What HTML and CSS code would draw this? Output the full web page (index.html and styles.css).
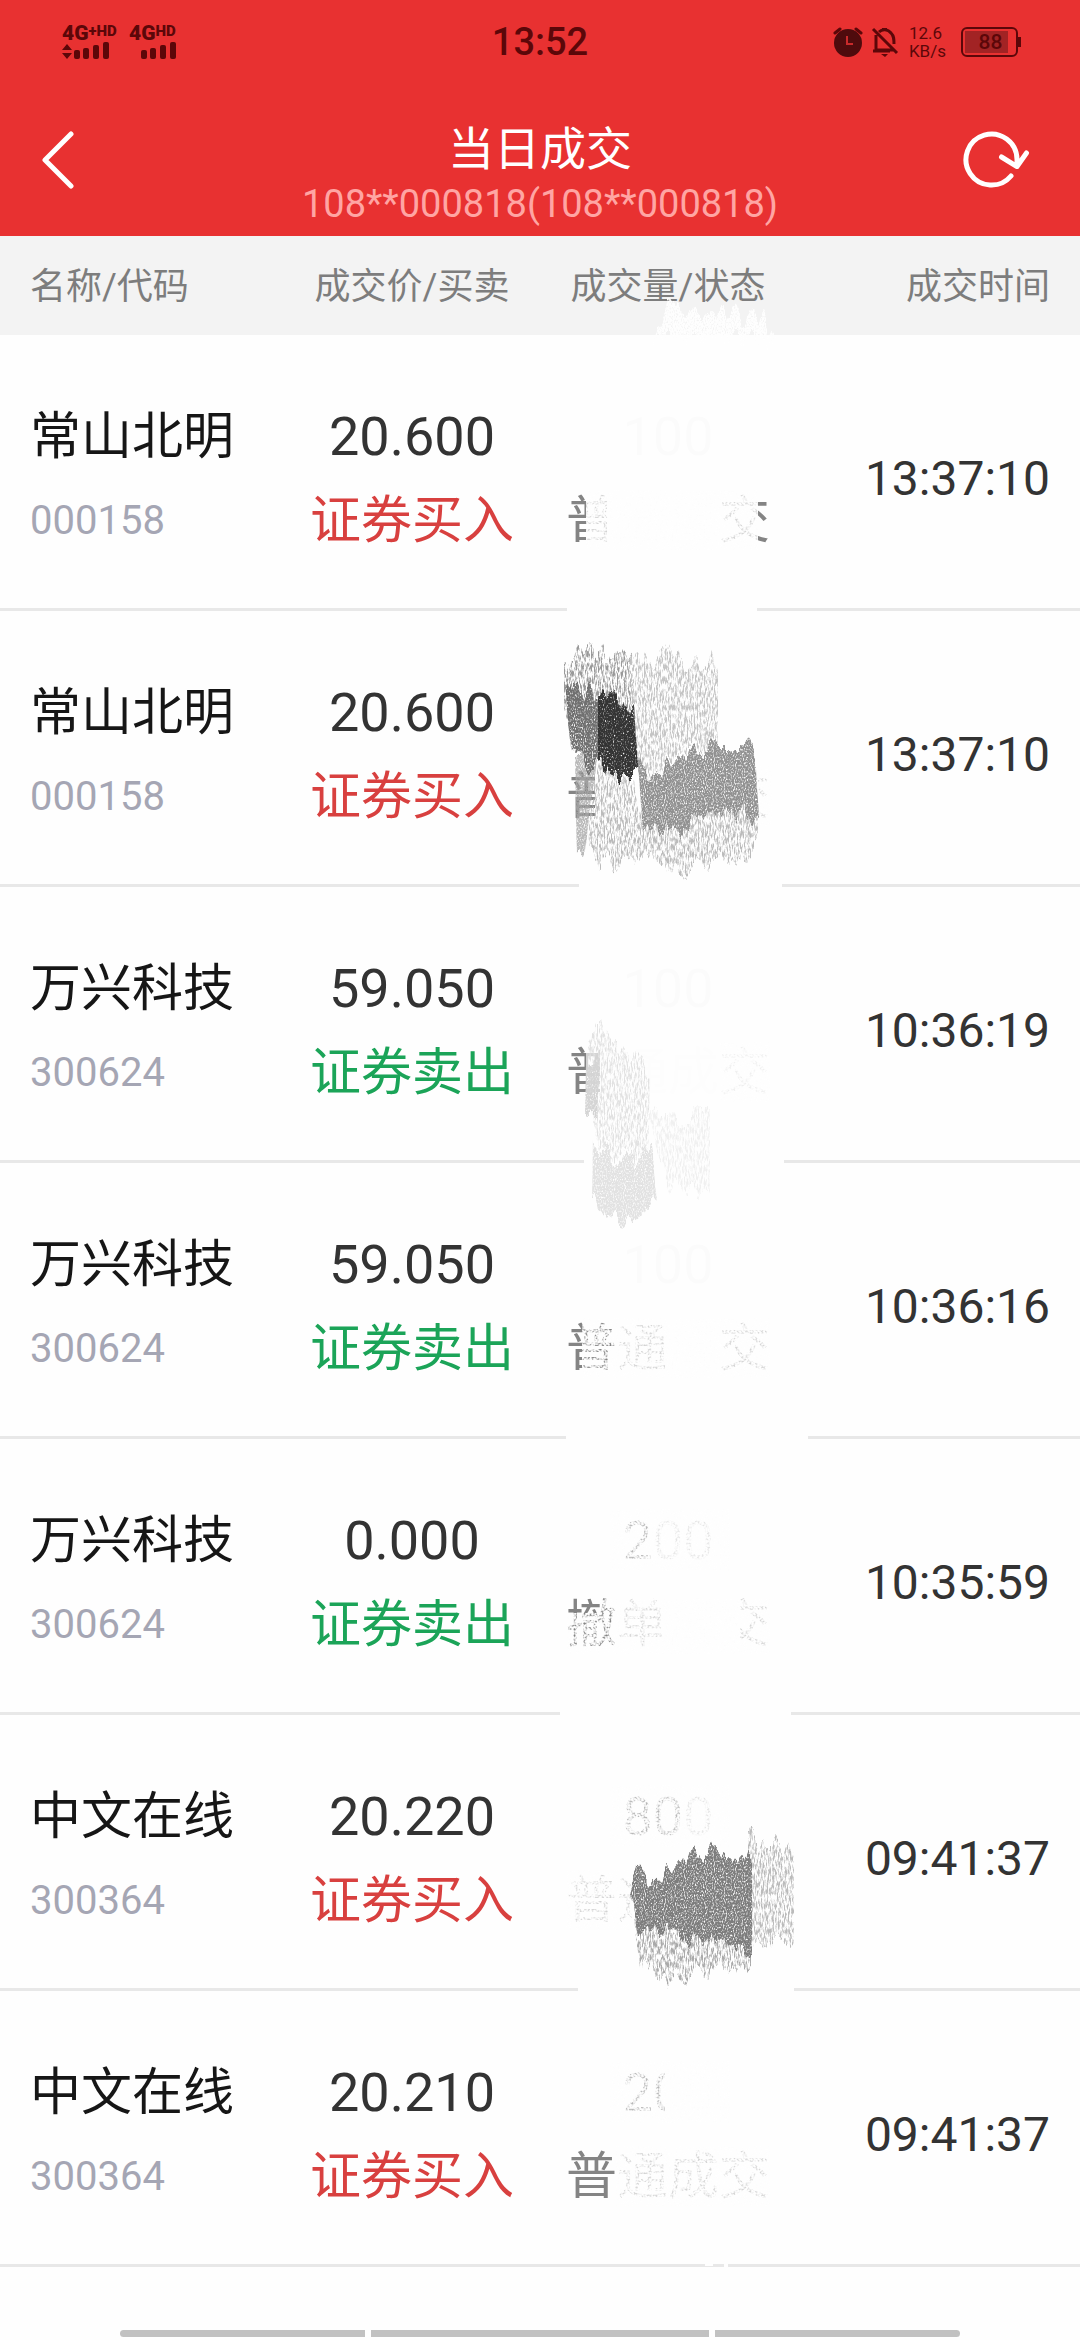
FILE: index.html
```html
<!DOCTYPE html>
<html lang="zh-CN">

<head>
  <meta charset="UTF-8">
  <meta name="viewport" content="width=device-width, initial-scale=1.0">
  <title>当日成交</title>
  <link rel="stylesheet" href="styles.css">
</head>

<body>
  <!-- 涂抹笔刷滤镜 -->
  <svg class="defs" aria-hidden="true">
    <defs>
      <filter id="dense" x="-20%" y="-30%" width="140%" height="160%" color-interpolation-filters="sRGB">
        <feTurbulence type="fractalNoise" baseFrequency=".12 .01" numOctaves="3" seed="4" result="n" />
        <feColorMatrix in="n" values="0 0 0 0 .5  0 1 0 0 0  0 0 1 0 0  0 0 0 0 1" result="m" />
        <feDisplacementMap in="SourceGraphic" in2="m" scale="46" xChannelSelector="R" yChannelSelector="G" result="s" />
        <feTurbulence type="fractalNoise" baseFrequency=".9 .5" numOctaves="2" seed="9" />
        <feColorMatrix values="0 0 0 0 0  0 0 0 0 0  0 0 0 0 0  3 0 0 0 -.6" result="g" />
        <feComposite in="s" in2="g" operator="in" />
      </filter>
      <filter id="sparse" x="-20%" y="-30%" width="140%" height="160%" color-interpolation-filters="sRGB">
        <feTurbulence type="fractalNoise" baseFrequency=".12 .01" numOctaves="3" seed="4" result="n" />
        <feColorMatrix in="n" values="0 0 0 0 .5  0 1 0 0 0  0 0 1 0 0  0 0 0 0 1" result="m" />
        <feDisplacementMap in="SourceGraphic" in2="m" scale="46" xChannelSelector="R" yChannelSelector="G" result="s" />
        <feTurbulence type="fractalNoise" baseFrequency=".7 .15" numOctaves="3" seed="2" />
        <feColorMatrix values="0 0 0 0 0  0 0 0 0 0  0 0 0 0 0  4 0 0 0 -1.65" result="g" />
        <feComposite in="s" in2="g" operator="in" />
      </filter>
      <filter id="speck" x="0" y="0" width="100%" height="100%" color-interpolation-filters="sRGB">
        <feTurbulence type="fractalNoise" baseFrequency=".5" numOctaves="2" seed="6" />
        <feColorMatrix values="0 0 0 0 0  0 0 0 0 0  0 0 0 0 0  3 0 0 0 -.7" result="g" />
        <feComposite in="SourceGraphic" in2="g" operator="in" />
      </filter>
    </defs>
  </svg>

  <div class="page">
    <header class="header">
      <div class="status-bar">
        <div class="signals">
          <div class="signal">
            <div class="net">4G<sup>+HD</sup></div>
            <svg width="48" height="18" viewBox="0 0 48 18">
              <path d="M0 8l5-6 5 6zM0 11h10l-5 6z" />
              <rect x="12" y="8" width="6" height="9" rx="2" />
              <rect x="21" y="6" width="6" height="11" rx="2" />
              <rect x="31" y="3" width="6" height="14" rx="2" />
              <rect x="41" y="0" width="6" height="17" rx="2" />
            </svg>
          </div>
          <div class="signal">
            <div class="net">4G<sup>HD</sup></div>
            <svg width="48" height="18" viewBox="0 0 48 18">
              <rect x="12" y="8" width="6" height="9" rx="2" />
              <rect x="21" y="6" width="6" height="11" rx="2" />
              <rect x="31" y="3" width="6" height="14" rx="2" />
              <rect x="41" y="0" width="6" height="17" rx="2" />
            </svg>
          </div>
        </div>
        <div class="clock">13:52</div>
        <div class="indicators">
          <svg width="30" height="30" viewBox="0 0 30 30">
            <circle cx="15" cy="16" r="14" fill="#4f0b0d" />
            <path d="M2 6l5-4M28 6l-5-4" stroke="#5c0709" stroke-width="3" stroke-linecap="round" />
            <path d="M14 9v8h6" fill="none" stroke="#c92a2b" stroke-width="2" />
          </svg>
          <svg width="28" height="30" viewBox="0 0 28 30" fill="none" stroke="#5c0709" stroke-width="3">
            <path d="M2 2l24 24M5 8v15h18M2 24h17M8 5c3-3 9-3 12 1 3 3 3 6 3 11" />
            <path d="M10 27h7l-3 3zM11 1h5v3h-5z" fill="#5c0709" stroke="none" />
          </svg>
          <div class="speed"><span>12.6</span><span>KB/s</span></div>
          <div class="battery"><span>88</span></div>
        </div>
      </div>

      <nav class="nav">
        <button type="button" class="icon-btn back" aria-label="返回">
          <svg width="32" height="58" viewBox="0 0 32 58">
            <path d="M29 3L3 29l26 26" />
          </svg>
        </button>
        <div class="titles">
          <h1>当日成交</h1>
          <p>108**000818(108**000818)</p>
        </div>
        <button type="button" class="icon-btn refresh" aria-label="刷新">
          <svg width="67" height="60" viewBox="0 0 67 60">
            <path d="M48 46A25.5 25.5 0 1 1 54 29.5V35M38.5 27L54 36.5L63.5 23" />
          </svg>
        </button>
      </nav>
    </header>

    <table class="deals">
      <thead>
        <tr>
          <th class="col-name">名称/代码</th>
          <th class="col-mid">成交价/买卖</th>
          <th class="col-mid status">成交量/状态
            <svg class="smear" width="300" height="99" viewBox="0 0 300 99">
              <path class="wipe" filter="url(#dense)" d="M128 76L150 72L190 76L226 84L236 104L112 104Z" />
            </svg>
          </th>
          <th class="col-time">成交时间</th>
        </tr>
      </thead>
      <tbody>
        <tr>
          <td><div class="name">常山北明</div><div class="code">000158</div></td>
          <td class="col-mid"><div class="price">20.600</div><div class="buy">证券买入</div></td>
          <td class="col-mid status"><div class="price">100</div><div class="state">普通成交</div>
            <svg class="smear" width="300" height="276" viewBox="0 0 300 276">
              <path class="wipe" d="M70 70H190V132H70ZM67 155H178V215H67ZM27 272H217V276H27Z" />
              <path class="veil" d="M46 155H67V215H46ZM178 155H218V215H178Z" />
              <path class="wipe" filter="url(#speck)" d="M46 155H218V215H46Z" />
            </svg>
          </td>
          <td class="time">13:37:10</td>
        </tr>
        <tr>
          <td><div class="name">常山北明</div><div class="code">000158</div></td>
          <td class="col-mid"><div class="price">20.600</div><div class="buy">证券买入</div></td>
          <td class="col-mid status"><div class="price"></div><div class="state">普通成交</div>
            <svg class="smear" width="300" height="276" viewBox="0 0 300 276">
              <path class="wipe" d="M55 150H218V220H55ZM39 272H242V276H39Z" />
              <path class="veil" d="M218 155H232V215H218Z" />
              <path class="wipe" filter="url(#speck)" d="M218 155H232V215H218Z" />
              <path filter="url(#sparse)" fill="#999" d="M24 52L50 38L92 44L96 160L24 100Z" />
              <path filter="url(#sparse)" fill="#c4c4c4" d="M90 46L178 50V135L120 155L94 160Z" />
              <path filter="url(#sparse)" fill="#bbb" d="M60 152L90 165L103 215L165 200L218 200V236L195 246L140 258L104 248L60 254L48 240L50 200Z" />
              <path filter="url(#dense)" fill="#a8a8a8" fill-opacity=".8" d="M35 150H58L50 195L45 242L37 238Z" />
              <path filter="url(#dense)" fill="#919191" d="M97 158L120 157L150 150L178 133L205 133L216 148L219 211L200 199L165 204L130 217L103 220Z" />
              <path filter="url(#dense)" fill="#6f6f6f" d="M25 68L40 82L62 84L62 154L45 152L32 142Z" />
              <path filter="url(#dense)" fill="#444" d="M58 80L72 84L94 102L98 166L75 166L58 154Z" />
              <path filter="url(#dense)" fill="#333" d="M58 80L72 86L92 102L98 166L75 166L58 154Z" />
            </svg>
          </td>
          <td class="time">13:37:10</td>
        </tr>
        <tr>
          <td><div class="name">万兴科技</div><div class="code">300624</div></td>
          <td class="col-mid"><div class="price">59.050</div><div class="sell">证券卖出</div></td>
          <td class="col-mid status"><div class="price">100</div><div class="state">普通成交</div>
            <svg class="smear" width="300" height="350" viewBox="0 0 300 350">
              <path class="wipe" d="M70 70H190V132H70ZM60 155H180V215H60ZM44 272H244V276H44Z" />
              <path class="veil" d="M46 155H60V215H46ZM180 155H230V215H180Z" />
              <path class="veil" d="M180 155H230V215H180Z" />
              <path class="wipe" filter="url(#speck)" d="M180 155H230V215H180Z" />
              <path filter="url(#sparse)" fill="#e2e2e2" d="M48 140L60 140L110 190L108 270L60 265L48 215Z" />
              <path filter="url(#sparse)" fill="#f0f0f0" d="M105 225H170V304L130 300Z" />
              <path filter="url(#dense)" fill="#d4d4d4" d="M46 175H60L57 228H45Z" />
              <path filter="url(#dense)" fill="#e2e2e2" d="M53 262L80 274L112 268L117 318L88 334L72 330L52 314Z" />
            </svg>
          </td>
          <td class="time">10:36:19</td>
        </tr>
        <tr>
          <td><div class="name">万兴科技</div><div class="code">300624</div></td>
          <td class="col-mid"><div class="price">59.050</div><div class="sell">证券卖出</div></td>
          <td class="col-mid status"><div class="price">100</div><div class="state">普通成交</div>
            <svg class="smear" width="300" height="276" viewBox="0 0 300 276">
              <path class="wipe" d="M70 70H190V132H70ZM125 155H178V215H125ZM26 272H268V276H26Z" />
              <path class="veil" d="M76 155H125V215H76ZM178 155H230V215H178Z" />
              <path class="wipe" filter="url(#speck)" d="M42 155H230V215H42Z" />
            </svg>
          </td>
          <td class="time">10:36:16</td>
        </tr>
        <tr>
          <td><div class="name">万兴科技</div><div class="code">300624</div></td>
          <td class="col-mid"><div class="price">0.000</div><div class="sell">证券卖出</div></td>
          <td class="col-mid status"><div class="price">200</div><div class="state">撤单成交</div>
            <svg class="smear" width="300" height="276" viewBox="0 0 300 276">
              <path class="wipe" d="M122 155H200V215H122ZM20 272H251V276H20Z" />
              <path class="veil" d="M70 70H190V132H70ZM76 155H122V215H76ZM200 155H230V215H200Z" />
              <path class="veil" d="M108 70H190V132H108Z" />
              <path class="wipe" filter="url(#speck)" d="M27 174H60V160H230V215H27ZM70 70H190V132H70Z" />
            </svg>
          </td>
          <td class="time">10:35:59</td>
        </tr>
        <tr>
          <td><div class="name">中文在线</div><div class="code">300364</div></td>
          <td class="col-mid"><div class="price">20.220</div><div class="buy">证券买入</div></td>
          <td class="col-mid status"><div class="price">800</div><div class="state">普通成交</div>
            <svg class="smear" width="300" height="276" viewBox="0 0 300 276">
              <path class="wipe" d="M92 155H230V215H92ZM38 272H254V276H38Z" />
              <path class="veil" d="M70 70H190V132H70ZM26 155H92V215H26Z" />
              <path class="veil" d="M140 70H190V132H140Z" />
              <path class="wipe" filter="url(#speck)" d="M26 155H92V215H26ZM70 70H190V132H70Z" />
              <path filter="url(#sparse)" fill="#bbb" d="M208 124L240 124L254 140V228L215 236L208 200Z" />
              <path filter="url(#sparse)" fill="#aaa" d="M94 206L130 206L160 225L212 218V244L180 254L120 262L100 252Z" />
              <path filter="url(#dense)" fill="#7c7c7c" d="M90 174L96 160L130 158L160 143L175 136L198 138L212 151V232L185 224L162 232L140 212L98 218Z" />
            </svg>
          </td>
          <td class="time">09:41:37</td>
        </tr>
        <tr>
          <td><div class="name">中文在线</div><div class="code">300364</div></td>
          <td class="col-mid"><div class="price">20.210</div><div class="buy">证券买入</div></td>
          <td class="col-mid status"><div class="price">200</div><div class="state">普通成交</div>
            <svg class="smear" width="300" height="276" viewBox="0 0 300 276">
              <path class="wipe" d="M125 70H190V132H125ZM165 272H173V275H165ZM184 272H188V276H184Z" />
              <path class="veil" d="M70 70H190V132H70ZM76 155H230V215H76Z" />
              <path class="wipe" filter="url(#speck)" d="M76 155H230V215H76ZM70 70H190V132H70Z" />
            </svg>
          </td>
          <td class="time">09:41:37</td>
        </tr>
      </tbody>
    </table>

    <div class="gesture-bar">
      <span></span>
      <span class="wide"></span>
      <span></span>
    </div>
  </div>
</body>

</html>
```
FILE: styles.css
```css
* {
  margin: 0;
  padding: 0;
  box-sizing: border-box;
}

body {
  font-family: Roboto, "Noto Sans CJK SC", sans-serif;
  background: #fefefe;
  color: #333;
}

.defs {
  position: absolute;
  width: 0;
  height: 0;
}

.page {
  display: flex;
  flex-direction: column;
  min-height: 100vh;
}

.header {
  background: #e83131;
}

.status-bar {
  display: grid;
  grid-template-columns: 1fr auto 1fr;
  align-items: center;
  height: 84px;
  padding: 0 62px;
  color: #5c0709;
}

.signals {
  display: flex;
  gap: 8px;
}

.signal svg {
  display: block;
  fill: #5c0709;
}

.net {
  display: flex;
  min-width: 59px;
  font-size: 21px;
  font-weight: 900;
  line-height: 17px;
}

.net sup {
  font-size: 15px;
  line-height: 12px;
}

.clock {
  font-size: 38px;
  font-weight: 500;
}

.indicators {
  display: flex;
  align-items: center;
  justify-content: flex-end;
}

.indicators svg {
  margin-right: 8px;
}

.speed {
  display: flex;
  flex-direction: column;
  margin: 0 15px 0 2px;
  font-size: 17px;
  line-height: 18px;
}

.battery {
  position: relative;
  width: 57px;
  height: 30px;
  padding: 2px;
  border: 2px solid #5c0709;
  border-radius: 6px;
}

.battery::after {
  content: "";
  position: absolute;
  top: 8px;
  right: -5px;
  width: 3px;
  height: 10px;
  background: #5c0709;
}

.battery span {
  display: block;
  width: 43px;
  padding-left: 8px;
  background: #a22324;
  font-size: 21px;
  font-weight: 500;
  line-height: 22px;
  text-align: center;
}

.nav {
  display: flex;
  align-items: center;
  justify-content: space-between;
  height: 152px;
  padding: 0 50px 0 42px;
}

.icon-btn {
  display: flex;
  width: 78px;
  background: none;
  border: none;
  cursor: pointer;
}

.icon-btn.back {
  width: 86px;
}

.icon-btn.refresh {
  justify-content: flex-end;
}

.icon-btn svg {
  fill: none;
  stroke: #fff;
  stroke-width: 5;
  stroke-linecap: round;
  stroke-linejoin: round;
}

.titles {
  padding-top: 34px;
  text-align: center;
  line-height: 55px;
}

.titles h1 {
  color: #fff;
  font-size: 46px;
  font-weight: 400;
  line-height: 55px;
}

.titles p {
  color: #ffa5a3;
  font-size: 38px;
}

.deals {
  width: 100%;
  table-layout: fixed;
  border-spacing: 0;
}

.deals th {
  height: 99px;
  padding-bottom: 5px;
  background: #f3f3f3;
  color: #7d7d7d;
  font-size: 36px;
  font-weight: 400;
  text-align: left;
}

.deals .col-name {
  width: 26.3%;
  padding-left: 30px;
}

.deals .col-mid {
  width: 23.7%;
  text-align: center;
}

.deals .col-time {
  padding-right: 30px;
  text-align: right;
}

.deals td {
  height: 276px;
  padding: 60px 0 45px;
  border-bottom: 3px solid #e8e8e8;
  line-height: 84px;
  white-space: nowrap;
}

.deals td:first-child {
  padding-left: 30px;
}

.deals td.time {
  padding-right: 30px;
  font-size: 48px;
  text-align: right;
}

.name,
.buy,
.sell,
.state {
  height: 84px;
  font-size: 51px;
}

.name {
  color: #161616;
}

.code {
  color: #a5a6b4;
  font-size: 40px;
}

.price {
  height: 84px;
  font-size: 54px;
}

.buy {
  color: #d8403f;
}

.sell {
  color: #1ba458;
}

.state {
  color: #848484;
}

/* 涂抹遮挡层 */
.status {
  position: relative;
}

.smear {
  position: absolute;
  top: 0;
  left: 0;
  z-index: 1;
  overflow: visible;
  pointer-events: none;
}

.wipe {
  fill: #fefefe;
  fill-opacity: 0.99;
}

.veil {
  fill: #fefefe;
  fill-opacity: 0.65;
}

.gesture-bar {
  display: flex;
  gap: 6px;
  margin-top: auto;
  padding: 0 120px 3px;
}

.gesture-bar span {
  flex: 245;
  height: 7px;
  background: #c1c1c1;
}

.gesture-bar .wide {
  flex: 338;
}

.gesture-bar span:first-child {
  border-radius: 4px 0 0 4px;
}

.gesture-bar span:last-child {
  border-radius: 0 4px 4px 0;
}
```
